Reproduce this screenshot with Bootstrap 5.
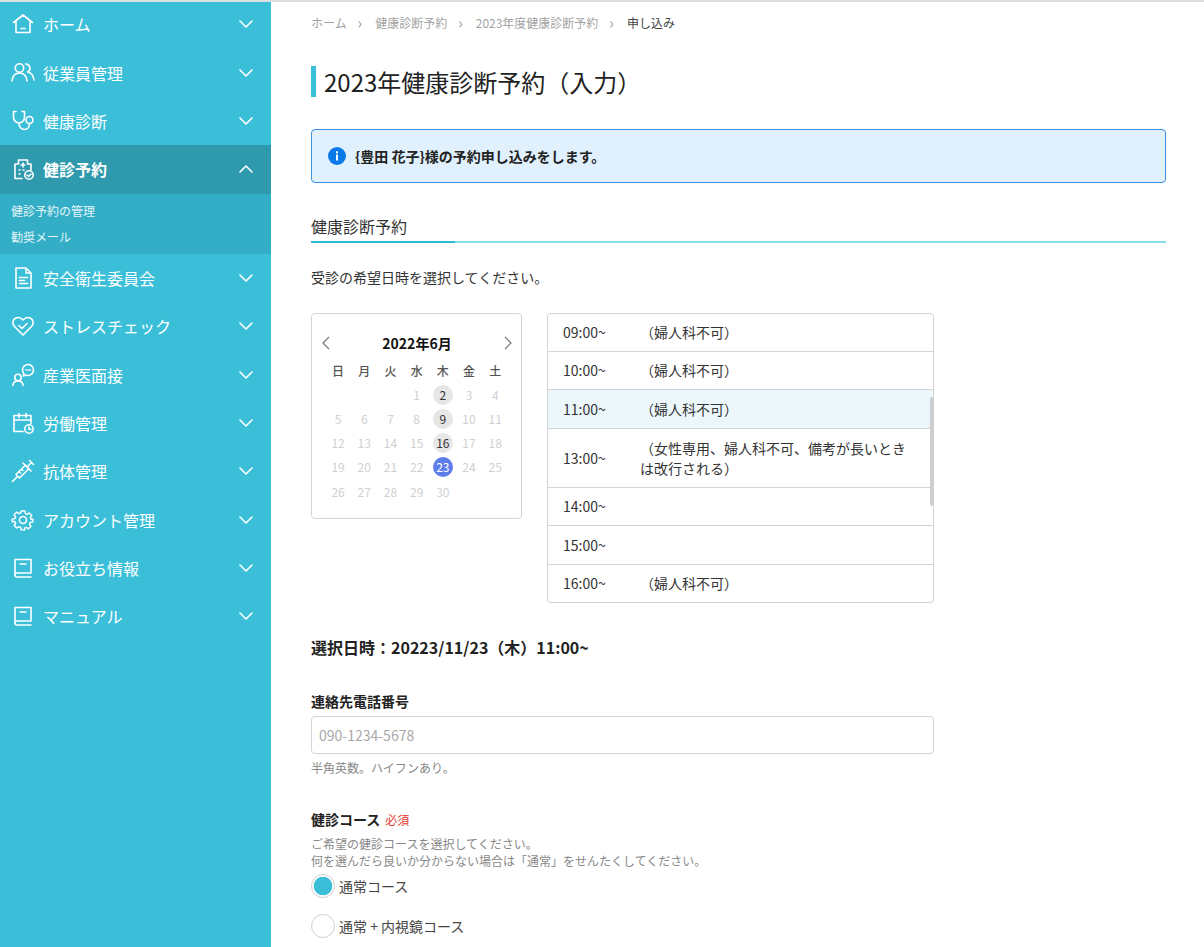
<!DOCTYPE html>
<html lang="ja">
<head>
  <meta charset="UTF-8">
  <title>2023年健康診断予約（入力）</title>
  <meta name="viewport" content="width=device-width, initial-scale=1">
  <link href="https://cdn.jsdelivr.net/npm/bootstrap@5.3.2/dist/css/bootstrap.min.css" rel="stylesheet">
  <style>
    body {
      font-family: "Noto Sans CJK JP", "Noto Sans", sans-serif;
      font-size: 14px;
      color: #333;
      background: #fff;
      height: 947px;
      overflow: hidden;
    }
    .top-strip { position: absolute; left: 0; right: 0; top: 0; height: 2px; background: #dcdfe0; }
    .side-menu { width: 271px; height: 947px; flex: none; background: #3bbfd9; color: #fff; }
    .menu-row { height: 48.4px; padding: 0 17px 0 11px; font-size: 16px; line-height: 24px; }
    .menu-row svg.menu-ico { width: 24px; height: 24px; margin-right: 8px; flex: none; fill: none; stroke: #fff; stroke-width: 1.6; stroke-linecap: round; stroke-linejoin: round; }
    .menu-row svg.chev { width: 16px; height: 16px; margin-left: auto; fill: none; stroke: #fff; stroke-width: 1.6; stroke-linecap: round; stroke-linejoin: round; }
    .menu-open { background: #2f99ad; font-weight: 700; }
    .sub-menu { height: 60px; background: #33aec6; padding: 4px 0 0 11px; font-size: 12px; line-height: 26px; color: #e2f5f9; }
    .main-area { padding: 0 38px 0 40px; min-width: 0; }
    .crumbs { margin: 14px 0 0; font-size: 12px; line-height: 18px; --bs-breadcrumb-divider: '›'; --bs-breadcrumb-item-padding-x: 10.7px; --bs-breadcrumb-margin-bottom: 0; }
    .crumbs .breadcrumb-item { color: #a3a3a3; }
    .crumbs .breadcrumb-item::before { color: #a3a3a3; padding-right: 13px; font-size: 16px; line-height: 16px; }
    .crumbs .breadcrumb-item.active { color: #444; }
    .page-title { margin: 34px 0 0; border-left: 5px solid #3bbfd9; padding-left: 8px; font-size: 24px; line-height: 31px; font-weight: 400; color: #222; }
    .info-box { margin: 32px 0 0; height: 54px; padding: 0 16px; background: #e0f0fd; border: 1px solid #3c92dd; border-radius: 4px; color: #222; font-weight: 700; font-size: 14px; line-height: 20px; }
    .info-box svg { width: 18px; height: 18px; margin-right: 9px; flex: none; }
    .sec-head { margin: 32px 0 0; font-size: 16px; line-height: 23px; font-weight: 400; color: #333; background: linear-gradient(to right, #2fbbd6 144px, #86deea 144px) left bottom / 100% 2px no-repeat; height: 28px; }
    .lead-text { margin: 22px 0 0; line-height: 24px; }
    .pick-row { margin-top: 24px; gap: 25px; }
    .cal-box { width: 211px; height: 206px; border: 1px solid #d4d4d4; border-radius: 4px; padding: 18px 13px 0; }
    .cal-head { height: 22px; margin: 0 -6px 0 -5px; font-weight: 700; font-size: 14px; line-height: 22px; color: #111; }
    .cal-head svg { width: 12px; height: 14px; fill: none; stroke: #777; stroke-width: 1.2; }
    .cal-grid { display: grid; grid-template-columns: repeat(7, 26.2px); grid-auto-rows: 24.1px; margin-top: 5px; font-size: 12px; text-align: center; color: #d0d0d0; }
    .cal-grid > span { display: flex; align-items: center; justify-content: center; }
    .cal-grid .wk { color: #555; font-weight: 500; }
    .cal-grid b { width: 20px; height: 20px; border-radius: 50%; font-weight: 400; line-height: 20px; display: block; }
    .day-open { background: #e6e6e6; color: #333; }
    .day-pick { background: #5f7de8; color: #fff; }
    .time-box { width: 387px; height: 290px; }
    .time-box .list-group { --bs-list-group-border-color: #d4d4d4; --bs-list-group-border-radius: 4px; height: 100%; }
    .time-row { padding: 0 15px; height: 38.5px; display: flex; align-items: center; line-height: 20px; color: #333; }
    .time-row.tall { height: 59px; }
    .time-row.now { background: #ebf7fa; }
    .time-at { width: 77px; flex: none; }
    .time-note { width: 270px; }
    .thumb { position: absolute; right: 0; top: 84px; width: 4px; height: 109px; background: #cfcfcf; border-radius: 2px; }
    .picked { margin: 32px 0 0; font-size: 16px; line-height: 24px; font-weight: 700; color: #222; }
    .tel-wrap { margin-top: 32px; }
    .fld-label { margin: 0; font-weight: 700; line-height: 20px; color: #222; }
    .main-area .tel-input { width: 623px; height: 38px; margin-top: 5px; border-color: #d4d4d4; border-radius: 4px; padding: 0 7px; font-size: 14px; }
    .tel-input::placeholder { color: #a8a8a8; }
    .help-text { font-size: 12px; line-height: 18px; color: #888; }
    .tel-help { margin-top: 5px; }
    .course-wrap { margin-top: 32px; }
    .course-help { margin-top: 5px; line-height: 17px; }
    .must { color: #e23a30; font-size: 12px; font-weight: 400; margin-left: 5px; }
    .course { min-height: 0; padding: 0; margin: 5px 0 0; display: flex; align-items: center; height: 24px; }
    .course-next { margin-top: 16px; }
    .course .form-check-input { width: 24px; height: 24px; margin: 0 4px 0 0; float: none; border-color: #cfcfcf; background: #fff; }
    .course .form-check-input:checked { border-color: #cfcfcf; background: radial-gradient(circle, #3bbfd9 9px, #fff 9.6px); }
    .course .form-check-label { line-height: 24px; color: #444; }
  </style>
</head>
<body>
<div class="top-strip"></div>
<div class="d-flex">
  <nav class="side-menu">
    <div class="menu-row d-flex align-items-center">
      <svg class="menu-ico" viewBox="0 0 24 24"><path d="M2.500 10.500 12 3l9.500 7.500M5 9v11.500h14V9M10 16.500h4"/></svg>ホーム
      <svg class="chev" viewBox="0 0 16 16"><path d="M2 5l6 6 6-6"/></svg>
    </div>
    <div class="menu-row d-flex align-items-center">
      <svg class="menu-ico" viewBox="0 0 24 24"><circle cx="8.500" cy="7" r="4.200"/><path d="M1 20c.5-5 3-8 7.500-8s7 3 7.500 8"/><path d="M14.500 3a4.200 4.200 0 0 1 2 8c3.500.5 6 3.500 6.500 8"/></svg>従業員管理
      <svg class="chev" viewBox="0 0 16 16"><path d="M2 5l6 6 6-6"/></svg>
    </div>
    <div class="menu-row d-flex align-items-center">
      <svg class="menu-ico" viewBox="0 0 24 24"><path d="M5 2.500H2.500v5.500c0 3.500 2.500 6 5.500 6s5.500-2.500 5.500-6V2.500H11"/><path d="M8 14c0 4 2.500 6.500 5.500 6.500 3 0 5-2.500 5-6"/><circle cx="18.500" cy="11" r="3.500"/></svg>健康診断
      <svg class="chev" viewBox="0 0 16 16"><path d="M2 5l6 6 6-6"/></svg>
    </div>
    <div class="menu-row menu-open d-flex align-items-center">
      <svg class="menu-ico" viewBox="0 0 24 24"><path d="M11 21.500H4V7h3.500V3h9v4H20v6"/><path d="M12 6v4M10 8h4M8 13h1M12 13h1M8 17h1"/><circle cx="18" cy="18" r="4.200"/><path d="M16 18l1.500 1.500 2.500-2.500"/></svg>健診予約
      <svg class="chev" viewBox="0 0 16 16"><path d="M2 11l6-6 6 6"/></svg>
    </div>
    <div class="sub-menu">
      <div>健診予約の管理</div>
      <div>勧奨メール</div>
    </div>
    <div class="menu-row d-flex align-items-center">
      <svg class="menu-ico" viewBox="0 0 24 24"><path d="M5 2h10l5 5v15H5zM15 2v5h5M8.500 11.500h8M8.500 14.500h5M8.500 17.500h8"/></svg>安全衛生委員会
      <svg class="chev" viewBox="0 0 16 16"><path d="M2 5l6 6 6-6"/></svg>
    </div>
    <div class="menu-row d-flex align-items-center">
      <svg class="menu-ico" viewBox="0 0 24 24"><path d="M12 21 3.500 12.500C1 10 1.500 6 4 4.500c2.800-1.700 6-.8 8 1.500 2-2.300 5.200-3.200 8-1.500 2.500 1.500 3 5.500.5 8z"/><path d="M8 11.500l3 3 5-5"/></svg>ストレスチェック
      <svg class="chev" viewBox="0 0 16 16"><path d="M2 5l6 6 6-6"/></svg>
    </div>
    <div class="menu-row d-flex align-items-center">
      <svg class="menu-ico" viewBox="0 0 24 24"><circle cx="7" cy="14.500" r="3.200"/><path d="M2 22.500c0-3 2-4.500 5-4.500s5 1.500 5 4.500"/><path d="M11.500 7a5.500 5.500 0 1 1 3.500 5.100L12.500 13l.3-2.600A5.500 5.500 0 0 1 11.500 7z"/><path d="M15 7h.4M17 7h.4M19 7h.4"/></svg>産業医面接
      <svg class="chev" viewBox="0 0 16 16"><path d="M2 5l6 6 6-6"/></svg>
    </div>
    <div class="menu-row d-flex align-items-center">
      <svg class="menu-ico" viewBox="0 0 24 24"><path d="M12 20.500H3V4.500h17v8M3 9h17M8 2.500v4M15 2.500v4"/><circle cx="18" cy="18" r="4.200"/><path d="M18 16v2.200h2"/></svg>労働管理
      <svg class="chev" viewBox="0 0 16 16"><path d="M2 5l6 6 6-6"/></svg>
    </div>
    <div class="menu-row d-flex align-items-center">
      <svg class="menu-ico" viewBox="0 0 24 24"><path d="M1.500 22.500l5-5M5 15.500l3.500 3.500L18 9.500 14.500 6zM12 4l8 8M16.500 7.500l4-4M18.500 1.500l4 4M8 12.500l1.500 1.500M10.500 10l1.500 1.500"/></svg>抗体管理
      <svg class="chev" viewBox="0 0 16 16"><path d="M2 5l6 6 6-6"/></svg>
    </div>
    <div class="menu-row d-flex align-items-center">
      <svg class="menu-ico" viewBox="0 0 24 24"><circle cx="12" cy="12" r="3.500"/><path d="M10 2h4l.6 2.900 1.900.8 2.500-1.600 2.800 2.800-1.600 2.500.8 1.900L23 11v3l-2.900.6-.8 1.900 1.600 2.500-2.800 2.800-2.500-1.600-1.900.8L14 23h-4l-.6-2.900-1.900-.8-2.500 1.600-2.800-2.800 1.600-2.500-.8-1.900L0 14v-3l3-.6.800-1.900L2.200 6l2.800-2.800 2.500 1.600 1.900-.8z" transform="translate(1.200 1.200) scale(.9)"/></svg>アカウント管理
      <svg class="chev" viewBox="0 0 16 16"><path d="M2 5l6 6 6-6"/></svg>
    </div>
    <div class="menu-row d-flex align-items-center">
      <svg class="menu-ico" viewBox="0 0 24 24"><path d="M4 19V3.500h16V17H6a2 2 0 0 0-2 2 2 2 0 0 0 2 2h14M9 8h6"/></svg>お役立ち情報
      <svg class="chev" viewBox="0 0 16 16"><path d="M2 5l6 6 6-6"/></svg>
    </div>
    <div class="menu-row d-flex align-items-center">
      <svg class="menu-ico" viewBox="0 0 24 24"><path d="M4 19V3.500h16V17H6a2 2 0 0 0-2 2 2 2 0 0 0 2 2h14M9 8h6"/></svg>マニュアル
      <svg class="chev" viewBox="0 0 16 16"><path d="M2 5l6 6 6-6"/></svg>
    </div>
  </nav>

  <main class="main-area flex-grow-1">
    <ol class="breadcrumb crumbs">
      <li class="breadcrumb-item">ホーム</li>
      <li class="breadcrumb-item">健康診断予約</li>
      <li class="breadcrumb-item">2023年度健康診断予約</li>
      <li class="breadcrumb-item active">申し込み</li>
    </ol>
    <h1 class="page-title">2023年健康診断予約（入力）</h1>
    <div class="info-box d-flex align-items-center">
      <svg viewBox="0 0 18 18"><circle cx="9" cy="9" r="9" fill="#0a7ae8"/><rect x="8" y="7.500" width="2" height="6" fill="#fff"/><rect x="8" y="4.300" width="2" height="2" fill="#fff"/></svg>
      <span>{豊田 花子}様の予約申し込みをします。</span>
    </div>
    <h2 class="sec-head">健康診断予約</h2>
    <p class="lead-text">受診の希望日時を選択してください。</p>

    <div class="d-flex pick-row">
      <div class="cal-box">
        <div class="cal-head d-flex justify-content-between align-items-center">
          <svg viewBox="0 0 12 14"><path d="M9 1 3 7l6 6"/></svg>
          <span>2022年6月</span>
          <svg viewBox="0 0 12 14"><path d="M3 1l6 6-6 6"/></svg>
        </div>
        <div class="cal-grid" id="calGrid"></div>
      </div>

      <div class="time-box position-relative">
        <div class="list-group">
          <div class="list-group-item time-row"><span class="time-at">09:00~</span><span class="time-note">（婦人科不可）</span></div>
          <div class="list-group-item time-row"><span class="time-at">10:00~</span><span class="time-note">（婦人科不可）</span></div>
          <div class="list-group-item time-row now"><span class="time-at">11:00~</span><span class="time-note">（婦人科不可）</span></div>
          <div class="list-group-item time-row tall"><span class="time-at">13:00~</span><span class="time-note">（女性専用、婦人科不可、備考が長いときは改行される）</span></div>
          <div class="list-group-item time-row"><span class="time-at">14:00~</span></div>
          <div class="list-group-item time-row"><span class="time-at">15:00~</span></div>
          <div class="list-group-item time-row"><span class="time-at">16:00~</span><span class="time-note">（婦人科不可）</span></div>
        </div>
        <div class="thumb"></div>
      </div>
    </div>

    <p class="picked">選択日時：20223/11/23（木）11:00~</p>

    <div class="tel-wrap">
      <label class="fld-label d-block" for="telNo">連絡先電話番号</label>
      <input type="text" class="form-control tel-input" id="telNo" placeholder="090-1234-5678">
      <div class="help-text tel-help">半角英数。ハイフンあり。</div>
    </div>

    <div class="course-wrap">
      <div class="fld-label">健診コース<span class="must">必須</span></div>
      <div class="help-text course-help">ご希望の健診コースを選択してください。<br>何を選んだら良いか分からない場合は「通常」をせんたくしてください。</div>
      <div class="form-check course">
        <input class="form-check-input" type="radio" name="course" id="c1" checked>
        <label class="form-check-label" for="c1">通常コース</label>
      </div>
      <div class="form-check course course-next">
        <input class="form-check-input" type="radio" name="course" id="c2">
        <label class="form-check-label" for="c2">通常 + 内視鏡コース</label>
      </div>
    </div>
  </main>
</div>

<script src="https://cdn.jsdelivr.net/npm/bootstrap@5.3.2/dist/js/bootstrap.bundle.min.js"></script>
<script>
  // カレンダーの中身を組み立てる
  const grid = document.getElementById('calGrid');
  let html = '';
  ['日', '月', '火', '水', '木', '金', '土'].forEach(w => { html += `<span class="wk">${w}</span>`; });
  for (let i = 0; i < 3; i++) html += '<span></span>';
  for (let d = 1; d <= 30; d++) {
    if (d === 23) html += `<span><b class="day-pick">${d}</b></span>`;
    else if (d === 2 || d === 9 || d === 16) html += `<span><b class="day-open">${d}</b></span>`;
    else html += `<span>${d}</span>`;
  }
  grid.innerHTML = html;
</script>
</body>
</html>
